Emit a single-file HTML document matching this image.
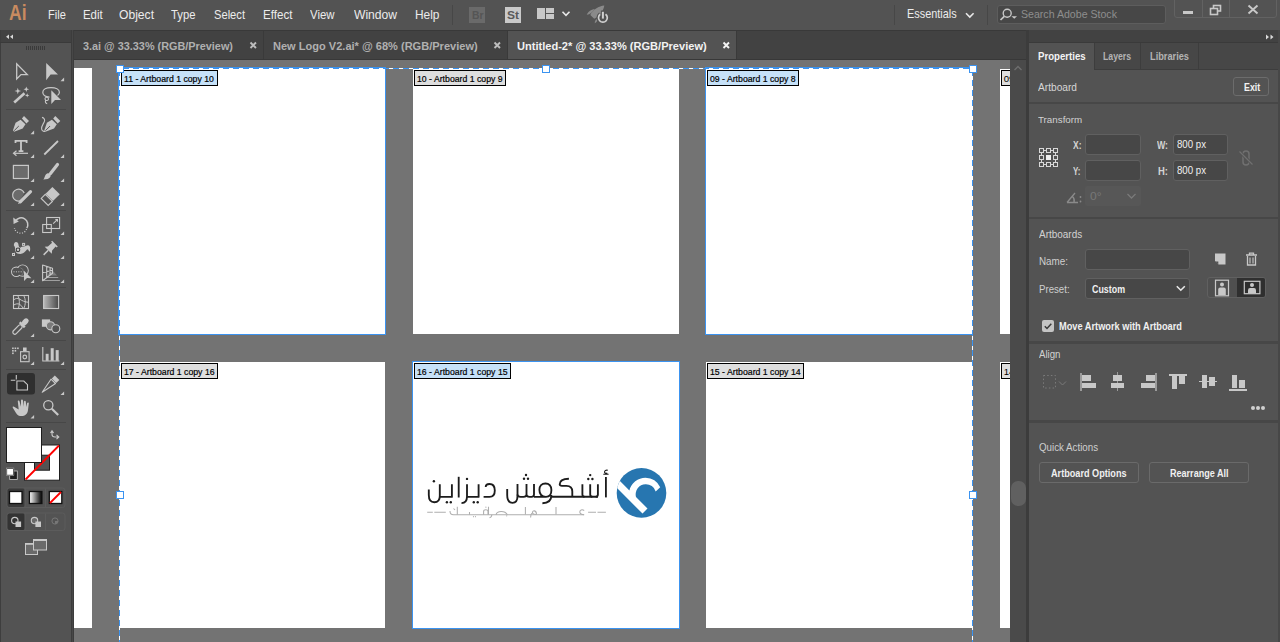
<!DOCTYPE html>
<html><head><meta charset="utf-8"><style>
*{margin:0;padding:0;box-sizing:border-box}
html,body{width:1280px;height:642px;overflow:hidden;background:#535353;font-family:"Liberation Sans",sans-serif}
.a{position:absolute}
.t{position:absolute;white-space:nowrap;line-height:1;transform-origin:0 0}
svg{position:absolute;overflow:visible}
</style></head><body>
<div class="a" style="left:0px;top:0px;width:1280px;height:30px;background:#535353;"></div>
<div class="t" style="left:8.70px;top:3.00px;font-size:21.5px;font-weight:bold;color:#c98b60;transform:scaleX(0.8140);">Ai</div>
<div class="t" style="left:47.50px;top:7.99px;font-size:13px;color:#ececec;transform:scaleX(0.8495);">File</div>
<div class="t" style="left:82.70px;top:7.99px;font-size:13px;color:#ececec;transform:scaleX(0.8792);">Edit</div>
<div class="t" style="left:119.00px;top:7.99px;font-size:13px;color:#ececec;transform:scaleX(0.9314);">Object</div>
<div class="t" style="left:171.00px;top:7.99px;font-size:13px;color:#ececec;transform:scaleX(0.8653);">Type</div>
<div class="t" style="left:214.00px;top:7.99px;font-size:13px;color:#ececec;transform:scaleX(0.8578);">Select</div>
<div class="t" style="left:263.40px;top:7.99px;font-size:13px;color:#ececec;transform:scaleX(0.8906);">Effect</div>
<div class="t" style="left:310.00px;top:7.99px;font-size:13px;color:#ececec;transform:scaleX(0.8753);">View</div>
<div class="t" style="left:353.50px;top:7.99px;font-size:13px;color:#ececec;transform:scaleX(0.9313);">Window</div>
<div class="t" style="left:414.50px;top:7.99px;font-size:13px;color:#ececec;transform:scaleX(0.9159);">Help</div>
<div class="a" style="left:452px;top:5px;width:1px;height:20px;background:#474747;"></div>
<div class="a" style="left:469px;top:7px;width:16px;height:16px;background:#6a6a6a;"></div>
<div class="t" style="left:471.50px;top:10.19px;font-size:11px;font-weight:bold;color:#555555;transform:scaleX(0.9412);">Br</div>
<div class="a" style="left:505px;top:7px;width:16px;height:16px;background:#c9c9c9;"></div>
<div class="t" style="left:507.00px;top:10.19px;font-size:11px;font-weight:bold;color:#5a5a5a;transform:scaleX(1.0909);">St</div>
<div class="a" style="left:537px;top:8px;width:8px;height:11px;background:#c8c8c8;"></div>
<div class="a" style="left:546px;top:8px;width:8px;height:5px;background:#c8c8c8;"></div>
<div class="a" style="left:546px;top:14px;width:8px;height:5px;background:#c8c8c8;"></div>
<svg style="left:560px;top:10px;" width="12" height="8" viewBox="0 0 12 8"><path d="M2.5 1.8 L6 5.3 L9.5 1.8" stroke="#e8e8e8" stroke-width="1.6" fill="none"/></svg>
<svg style="left:580px;top:0px;" width="35" height="30" viewBox="0 0 35 30"><g transform="translate(-580,0)"><path d="M604.3 5.6 C599 6 592.5 10 590.3 15 L594.2 18.8 C599.5 16.5 603.5 11 604.3 5.6 Z" fill="#8a8a8a"/><path d="M594.8 9 C591 9.5 587.8 12 586.8 14.8 C590 14.5 592.5 12.5 594.8 9 Z" fill="#8a8a8a"/><path d="M598 18 C595.5 19.5 594.5 21.5 594.8 23.2 C597 22 597.8 20 598 18 Z" fill="#8a8a8a"/><path d="M600.3 14.2 A4.4 4.4 0 1 0 605.5 14.2" fill="none" stroke="#535353" stroke-width="4"/><path d="M600.3 14.2 A4.4 4.4 0 1 0 605.5 14.2" fill="none" stroke="#d0d0d0" stroke-width="1.7"/><path d="M602.9 10.5 V19.5" stroke="#535353" stroke-width="4"/><path d="M602.9 11.8 V18.6" stroke="#d0d0d0" stroke-width="2"/></g></svg>
<div class="a" style="left:894px;top:5px;width:1px;height:20px;background:#474747;"></div>
<div class="t" style="left:906.60px;top:6.99px;font-size:13px;color:#ececec;transform:scaleX(0.8369);">Essentials</div>
<svg style="left:963px;top:11px;" width="12" height="8" viewBox="0 0 12 8"><path d="M3 2.2 L6.8 6 L10.6 2.2" stroke="#e8e8e8" stroke-width="1.6" fill="none"/></svg>
<div class="a" style="left:987px;top:5px;width:1px;height:20px;background:#474747;"></div>
<div class="a" style="left:997px;top:5px;width:169px;height:19px;background:#474747;border:1px solid #5d5d5d;border-radius:3px"></div>
<svg style="left:998px;top:7px;" width="22" height="15" viewBox="0 0 22 15"><circle cx="9.2" cy="6.3" r="4" stroke="#c8c8c8" stroke-width="1.4" fill="none"/><path d="M6.3 9.3 L2.5 13" stroke="#c8c8c8" stroke-width="1.7"/><path d="M13.5 9.3 L19 9.3 L16.25 11.8 Z" fill="#c8c8c8"/></svg>
<div class="t" style="left:1021.20px;top:8.81px;font-size:11.8px;color:#8e8e8e;transform:scaleX(0.8977);">Search Adobe Stock</div>
<div class="a" style="left:1174px;top:-3px;width:103px;height:21px;background:transparent;border:1px solid #626262;border-radius:3px"></div>
<div class="a" style="left:1202px;top:0px;width:1px;height:18px;background:#626262;"></div>
<div class="a" style="left:1229px;top:0px;width:1px;height:18px;background:#626262;"></div>
<div class="a" style="left:1183px;top:11px;width:10px;height:3px;background:#c8c8c8;"></div>
<svg style="left:1209px;top:4px;" width="15" height="12" viewBox="0 0 15 12"><rect x="4.5" y="1.5" width="7" height="5.5" stroke="#c8c8c8" stroke-width="1.6" fill="none"/><rect x="1.5" y="4.5" width="7" height="6" stroke="#c8c8c8" stroke-width="1.6" fill="#535353"/></svg>
<svg style="left:1246px;top:3px;" width="14" height="12" viewBox="0 0 14 12"><path d="M2.5 2.5 L11.5 10.5 M11.5 2.5 L2.5 10.5" stroke="#c8c8c8" stroke-width="1.9"/></svg>
<div class="a" style="left:74px;top:30px;width:955px;height:30px;background:#424242;"></div>
<div class="a" style="left:74px;top:30px;width:955px;height:1px;background:#393939;"></div>
<div class="a" style="left:74px;top:59px;width:955px;height:1px;background:#383838;"></div>
<div class="a" style="left:263px;top:31px;width:1px;height:28px;background:#3a3a3a;"></div>
<div class="a" style="left:507px;top:31px;width:1px;height:28px;background:#3a3a3a;"></div>
<div class="a" style="left:508px;top:31px;width:228px;height:28px;background:#535353;"></div>
<div class="a" style="left:736px;top:31px;width:1px;height:28px;background:#3a3a3a;"></div>
<div class="t" style="left:83.30px;top:40.18px;font-size:11.6px;font-weight:bold;color:#b0b0b0;transform:scaleX(0.9363);">3.ai @ 33.33% (RGB/Preview)</div>
<svg style="left:249.0px;top:41px;" width="9" height="9" viewBox="0 0 9 9"><path d="M1.5 1.5 L7 7 M7 1.5 L1.5 7" stroke="#bdbdbd" stroke-width="1.9"/></svg>
<div class="t" style="left:273.20px;top:40.18px;font-size:11.6px;font-weight:bold;color:#b0b0b0;transform:scaleX(0.9524);">New Logo V2.ai* @ 68% (RGB/Preview)</div>
<svg style="left:493.0px;top:41px;" width="9" height="9" viewBox="0 0 9 9"><path d="M1.5 1.5 L7 7 M7 1.5 L1.5 7" stroke="#bdbdbd" stroke-width="1.9"/></svg>
<div class="t" style="left:517.30px;top:40.18px;font-size:11.6px;font-weight:bold;color:#f2f2f2;transform:scaleX(0.9541);">Untitled-2* @ 33.33% (RGB/Preview)</div>
<svg style="left:722.3px;top:41px;" width="9" height="9" viewBox="0 0 9 9"><path d="M1.5 1.5 L7 7 M7 1.5 L1.5 7" stroke="#f4f4f4" stroke-width="1.9"/></svg>
<div class="a" style="left:74px;top:60px;width:936px;height:582px;background:#737373;"></div>
<div class="a" style="left:74px;top:68px;width:18px;height:266px;background:#ffffff;"></div>
<div class="a" style="left:74px;top:362px;width:18px;height:266px;background:#ffffff;"></div>
<div class="a" style="left:1000px;top:69px;width:10px;height:265px;background:#ffffff;"></div>
<div class="a" style="left:1000px;top:362px;width:10px;height:266px;background:#ffffff;"></div>
<div class="a" style="left:119px;top:68px;width:266px;height:266px;background:#fff;box-shadow:0 0 0 1px #3b93f0;"></div>
<div class="a" style="left:413px;top:68px;width:266px;height:266px;background:#fff;"></div>
<div class="a" style="left:706px;top:68px;width:266px;height:266px;background:#fff;box-shadow:0 0 0 1px #3b93f0;"></div>
<div class="a" style="left:119px;top:362px;width:266px;height:266px;background:#fff;"></div>
<div class="a" style="left:413px;top:362px;width:266px;height:266px;background:#fff;box-shadow:0 0 0 1px #3b93f0;"></div>
<div class="a" style="left:706px;top:362px;width:266px;height:266px;background:#fff;"></div>
<div class="a" style="left:121px;top:70px;width:97px;height:16px;background:#c6e1f8;border:1px solid #000"></div>
<div class="t" style="left:123.70px;top:73.67px;font-size:9.6px;color:#000000;transform:scaleX(0.9083);-webkit-text-stroke:0.2px #000;">11 - Artboard 1 copy 10</div>
<div class="a" style="left:414px;top:70px;width:92px;height:16px;background:#dedede;border:1px solid #000"></div>
<div class="t" style="left:416.70px;top:73.67px;font-size:9.6px;color:#000000;transform:scaleX(0.9066);-webkit-text-stroke:0.2px #000;">10 - Artboard 1 copy 9</div>
<div class="a" style="left:707px;top:70px;width:92px;height:16px;background:#c6e1f8;border:1px solid #000"></div>
<div class="t" style="left:709.70px;top:73.67px;font-size:9.6px;color:#000000;transform:scaleX(0.9066);-webkit-text-stroke:0.2px #000;">09 - Artboard 1 copy 8</div>
<div class="a" style="left:121px;top:363px;width:97px;height:16px;background:#dedede;border:1px solid #000"></div>
<div class="t" style="left:123.70px;top:366.67px;font-size:9.6px;color:#000000;transform:scaleX(0.9083);-webkit-text-stroke:0.2px #000;">17 - Artboard 1 copy 16</div>
<div class="a" style="left:414px;top:363px;width:97px;height:16px;background:#c6e1f8;border:1px solid #000"></div>
<div class="t" style="left:416.70px;top:366.67px;font-size:9.6px;color:#000000;transform:scaleX(0.9083);-webkit-text-stroke:0.2px #000;">16 - Artboard 1 copy 15</div>
<div class="a" style="left:707px;top:363px;width:97px;height:16px;background:#dedede;border:1px solid #000"></div>
<div class="t" style="left:709.70px;top:366.67px;font-size:9.6px;color:#000000;transform:scaleX(0.9083);-webkit-text-stroke:0.2px #000;">15 - Artboard 1 copy 14</div>
<div class="a" style="left:1001px;top:70px;width:20px;height:16px;background:#dedede;border:1px solid #000"></div>
<div class="t" style="left:1003.70px;top:73.67px;font-size:9.6px;color:#000;">09</div>
<div class="a" style="left:1001px;top:363px;width:20px;height:16px;background:#dedede;border:1px solid #000"></div>
<div class="t" style="left:1003.70px;top:366.67px;font-size:9.6px;color:#000;">14</div>
<div class="a" style="left:119px;top:68px;width:854px;height:1px;background:repeating-linear-gradient(to right,#fff 0 4px,#3b93f0 4px 10px)"></div>
<div class="a" style="left:119px;top:68px;width:1px;height:574px;background:repeating-linear-gradient(to bottom,#fff 0 2px,#3b93f0 2px 8px,#fff 8px 10px)"></div>
<div class="a" style="left:972px;top:68px;width:1px;height:574px;background:repeating-linear-gradient(to bottom,#fff 0 2px,#3b93f0 2px 8px,#fff 8px 10px)"></div>
<div class="a" style="left:116px;top:65px;width:8px;height:8px;background:#fff;border:1px solid #3b93f0"></div>
<div class="a" style="left:542px;top:65px;width:8px;height:8px;background:#fff;border:1px solid #3b93f0"></div>
<div class="a" style="left:969px;top:65px;width:8px;height:8px;background:#fff;border:1px solid #3b93f0"></div>
<div class="a" style="left:116px;top:491px;width:8px;height:8px;background:#fff;border:1px solid #3b93f0"></div>
<div class="a" style="left:969px;top:491px;width:8px;height:8px;background:#fff;border:1px solid #3b93f0"></div>
<svg style="left:413px;top:362px" width="266" height="266" viewBox="413 362 266 266"><defs><clipPath id="cc"><circle cx="641.5" cy="492.9" r="24.8"/></clipPath></defs><circle cx="641.5" cy="492.9" r="24.8" fill="#2776b0"/><g clip-path="url(#cc)"><path d="M605 476 L642.5 513.6 L647.5 508.6 L636 497 A10.2 10.2 0 0 1 645.5 484.2 A10.2 10.2 0 0 1 655.7 491.4 L660.2 487.3 A16.6 16.6 0 0 0 645.5 477.7 A16.6 16.6 0 0 0 629.4 490.4 L610 471 Z" fill="#fff"/></g><path d="M428.8 489.5 V495 C428.8 500 431 502.2 434.3 502.2 C437.8 502.2 439.8 500 439.8 496 V484.2" fill="none" stroke="#1c1c1c" stroke-width="1.85" stroke-linecap="butt" stroke-linejoin="round"/><path d="M439.8 496.9 H451.9 V484.2" fill="none" stroke="#1c1c1c" stroke-width="1.85" stroke-linecap="butt" stroke-linejoin="round"/><circle cx="433.9" cy="481.2" r="1.2" fill="#1c1c1c"/><circle cx="446.9" cy="502.2" r="1.2" fill="#1c1c1c"/><circle cx="450.8" cy="502.2" r="1.2" fill="#1c1c1c"/><path d="M458.7 476.8 V497.5" fill="none" stroke="#1c1c1c" stroke-width="1.85" stroke-linecap="butt" stroke-linejoin="round"/><path d="M467 484.2 V496.5 C467 501 465 503 461.5 503.2" fill="none" stroke="#1c1c1c" stroke-width="1.85" stroke-linecap="butt" stroke-linejoin="round"/><circle cx="467" cy="478.9" r="1.2" fill="#1c1c1c"/><path d="M467 496.9 H478.6 V484.2" fill="none" stroke="#1c1c1c" stroke-width="1.85" stroke-linecap="butt" stroke-linejoin="round"/><circle cx="473.8" cy="502.2" r="1.2" fill="#1c1c1c"/><circle cx="477.7" cy="502.2" r="1.2" fill="#1c1c1c"/><path d="M485.7 487 C485.7 485 487 484 489.5 484 C493 484 494.8 486.5 494.8 490.5 C494.8 494.8 493 496.9 489.5 496.9 H483.6" fill="none" stroke="#1c1c1c" stroke-width="1.85" stroke-linecap="butt" stroke-linejoin="round"/><path d="M507.2 489 V495 C507.2 500.5 509.5 502.8 512.5 502.8 C515.8 502.8 517.5 500.5 517.5 496 V483.9" fill="none" stroke="#1c1c1c" stroke-width="1.85" stroke-linecap="butt" stroke-linejoin="round"/><path d="M517.5 494.5 C517.5 496 518.5 496.8 520.5 496.8 H523.5 C525.5 496.8 526.5 496 526.5 494.5 V483.9 M526.5 494.5 C526.5 496 527.5 496.8 529.5 496.8 H531.5 C533.2 496.8 534 496 534 494.5 V483.9" fill="none" stroke="#1c1c1c" stroke-width="1.85" stroke-linecap="butt" stroke-linejoin="round"/><circle cx="524" cy="478.8" r="1.2" fill="#1c1c1c"/><circle cx="528" cy="478.8" r="1.2" fill="#1c1c1c"/><circle cx="526" cy="475" r="1.2" fill="#1c1c1c"/><path d="M534 496.8 H546 C549.5 496.8 551.4 495 551.4 490 C551.4 486 549 483.5 545.5 483.5 C541.8 483.5 539.4 486 539.4 489.8 C539.4 494 541.5 496.8 546 496.8 M551.4 495 C551.4 501 548.5 503.2 542.4 503.2" fill="none" stroke="#1c1c1c" stroke-width="1.85" stroke-linecap="butt" stroke-linejoin="round"/><path d="M551.4 496.7 H598" fill="none" stroke="#1c1c1c" stroke-width="1.85" stroke-linecap="butt" stroke-linejoin="round"/><path d="M568.9 478.7 C563 478.7 559.7 481 559.7 484.3 C559.7 485.3 560.5 485.8 562 485.8 H566.5 C570.5 485.8 572.3 488 572.3 491.5 V496.7" fill="none" stroke="#1c1c1c" stroke-width="1.85" stroke-linecap="butt" stroke-linejoin="round"/><path d="M582.4 484.3 V494.5 C582.4 496 583.2 496.7 584.5 496.7 M590.2 484.3 V494.5 C590.2 496 591 496.7 592.3 496.7 M597.9 484.3 V494.5 C597.9 496 597.2 496.7 595.8 496.7" fill="none" stroke="#1c1c1c" stroke-width="1.85" stroke-linecap="butt" stroke-linejoin="round"/><circle cx="588.3" cy="479" r="1.2" fill="#1c1c1c"/><circle cx="592.4" cy="479" r="1.2" fill="#1c1c1c"/><circle cx="590.2" cy="475.1" r="1.2" fill="#1c1c1c"/><path d="M605.9 477 V497.4" fill="none" stroke="#1c1c1c" stroke-width="1.85" stroke-linecap="butt" stroke-linejoin="round"/><path d="M607.8 470.2 C605.5 469.8 604.3 471 604.6 472.5 C605 473.5 606.5 473.6 607.3 473 M603.3 474.2 H608.6" fill="none" stroke="#1c1c1c" stroke-width="1.1"/><path d="M427.2 512.3 H432.8 M434.3 512.3 H445.8 M588.1 512.3 H596 M597.5 512.3 H605.9" fill="none" stroke="#aeaeae" stroke-width="1.05"/><path d="M450 511 C450 514 451 514.8 453.5 514.8 H584" fill="none" stroke="#aeaeae" stroke-width="1.05"/><path d="M457.3 506.7 V514.8 M469.5 512 V514.8 M488.5 506.7 V514.8 M525.4 507 V514.5 M556 507 V514.5" fill="none" stroke="#aeaeae" stroke-width="1.05"/><path d="M453.5 508.5 L455 510" fill="none" stroke="#aeaeae" stroke-width="1.05"/><path d="M483.6 514.8 V511.5 C483.6 509.3 488 509.3 488 511.5 V514.8" fill="none" stroke="#aeaeae" stroke-width="1.05"/><circle cx="485.9" cy="507.2" r="0.6" fill="#aeaeae"/><circle cx="473.5" cy="516.7" r="0.6" fill="#aeaeae"/><circle cx="475.5" cy="516.7" r="0.6" fill="#aeaeae"/><circle cx="506.7" cy="515.8" r="0.6" fill="#aeaeae"/><path d="M491.8 514.8 C491.8 516.5 491 517.5 489.5 517.8" fill="none" stroke="#aeaeae" stroke-width="1.05"/><path d="M496 514.8 C497 510.5 505 510.5 507.4 514.8" fill="none" stroke="#aeaeae" stroke-width="1.05"/><path d="M536.5 514.5 C536.5 510 532.5 510 532.5 512.5 C532.5 514 534 514.5 536.5 514.5 M532 513 C531 514 530.6 515.5 530.6 517.5" fill="none" stroke="#aeaeae" stroke-width="1.05"/><path d="M584.2 510.5 C582 509 579.8 510 579.8 512 C579.8 513.5 581.5 514.5 584.2 514.8" fill="none" stroke="#aeaeae" stroke-width="1.05"/></svg>
<div class="a" style="left:1010px;top:60px;width:16px;height:582px;background:#4a4a4a;"></div>
<svg style="left:1012px;top:64px;" width="12" height="8" viewBox="0 0 12 8"><path d="M2.5 6 L6 2.5 L9.5 6" stroke="#6e6e6e" stroke-width="1.3" fill="none"/></svg>
<div class="a" style="left:1011px;top:481px;width:15px;height:25px;background:#606060;border-radius:7px"></div>
<div class="a" style="left:1026px;top:30px;width:3px;height:612px;background:#3c3c3c;"></div>
<div class="a" style="left:1029px;top:30px;width:251px;height:612px;background:#535353;"></div>
<div class="a" style="left:1029px;top:30px;width:251px;height:13px;background:#424242;"></div>
<div class="a" style="left:1029px;top:42px;width:251px;height:1px;background:#3a3a3a;"></div>
<svg style="left:1264px;top:33px;" width="12" height="8" viewBox="0 0 12 8"><path d="M2 1.5 L5 4 L2 6.5 Z M6.5 1.5 L9.5 4 L6.5 6.5 Z" fill="#d8d8d8"/></svg>
<div class="a" style="left:1029px;top:43px;width:251px;height:27px;background:#474747;"></div>
<div class="a" style="left:1029px;top:43px;width:65px;height:27px;background:#535353;"></div>
<div class="a" style="left:1094px;top:43px;width:1px;height:27px;background:#3d3d3d;"></div>
<div class="a" style="left:1140px;top:43px;width:1px;height:27px;background:#3d3d3d;"></div>
<div class="a" style="left:1198px;top:43px;width:1px;height:27px;background:#3d3d3d;"></div>
<div class="a" style="left:1094px;top:69px;width:186px;height:1px;background:#3d3d3d;"></div>
<div class="t" style="left:1038.10px;top:51.11px;font-size:10.5px;font-weight:bold;color:#f4f4f4;transform:scaleX(0.9181);">Properties</div>
<div class="t" style="left:1103.40px;top:51.11px;font-size:10.5px;font-weight:bold;color:#b4b4b4;transform:scaleX(0.8295);">Layers</div>
<div class="t" style="left:1150.00px;top:51.11px;font-size:10.5px;font-weight:bold;color:#b4b4b4;transform:scaleX(0.8789);">Libraries</div>
<div class="t" style="left:1038.00px;top:82.09px;font-size:11px;color:#d6d6d6;transform:scaleX(0.9238);">Artboard</div>
<div class="a" style="left:1233px;top:77px;width:36px;height:19px;background:transparent;border:1px solid #6c6c6c;border-radius:3px"></div>
<div class="t" style="left:1243.60px;top:82.09px;font-size:11px;font-weight:bold;color:#f2f2f2;transform:scaleX(0.8025);">Exit</div>
<div class="a" style="left:1029px;top:102px;width:251px;height:2px;background:#474747;"></div>
<div class="t" style="left:1038.30px;top:115.42px;font-size:9.9px;color:#d2d2d2;transform:scaleX(0.9902);">Transform</div>
<svg style="left:0;top:0" width="1280" height="642" viewBox="0 0 1280 642"><rect x="1039.5" y="148.5" width="4" height="4" fill="none" stroke="#d8d8d8" stroke-width="1"/><rect x="1039.5" y="155.5" width="4" height="4" fill="none" stroke="#d8d8d8" stroke-width="1"/><rect x="1039.5" y="162.5" width="4" height="4" fill="none" stroke="#d8d8d8" stroke-width="1"/><rect x="1046.5" y="148.5" width="4" height="4" fill="none" stroke="#d8d8d8" stroke-width="1"/><rect x="1046.0" y="155.0" width="5" height="5" fill="#f0f0f0"/><rect x="1046.5" y="162.5" width="4" height="4" fill="none" stroke="#d8d8d8" stroke-width="1"/><rect x="1053.5" y="148.5" width="4" height="4" fill="none" stroke="#d8d8d8" stroke-width="1"/><rect x="1053.5" y="155.5" width="4" height="4" fill="none" stroke="#d8d8d8" stroke-width="1"/><rect x="1053.5" y="162.5" width="4" height="4" fill="none" stroke="#d8d8d8" stroke-width="1"/><path d="M1044 150.5 H1046 M1051 150.5 H1053 M1044 164.5 H1046 M1051 164.5 H1053 M1041.5 153 V155 M1041.5 160 V162 M1055.5 153 V155 M1055.5 160 V162" stroke="#d8d8d8" stroke-width="1"/></svg>
<div class="t" style="left:1072.50px;top:140.11px;font-size:10.5px;font-weight:bold;color:#d4d4d4;transform:scaleX(0.8095);">X:</div>
<div class="t" style="left:1073.00px;top:166.11px;font-size:10.5px;font-weight:bold;color:#d4d4d4;transform:scaleX(0.7630);">Y:</div>
<div class="t" style="left:1156.80px;top:140.11px;font-size:10.5px;font-weight:bold;color:#d4d4d4;transform:scaleX(0.8354);">W:</div>
<div class="t" style="left:1158.00px;top:166.11px;font-size:10.5px;font-weight:bold;color:#d4d4d4;transform:scaleX(0.9027);">H:</div>
<div class="a" style="left:1085px;top:134px;width:56px;height:21px;background:#474747;border:1px solid #606060;border-radius:3px"></div>
<div class="a" style="left:1085px;top:160px;width:56px;height:21px;background:#474747;border:1px solid #606060;border-radius:3px"></div>
<div class="a" style="left:1173px;top:134px;width:55px;height:21px;background:#474747;border:1px solid #606060;border-radius:3px"></div>
<div class="a" style="left:1173px;top:160px;width:55px;height:21px;background:#474747;border:1px solid #606060;border-radius:3px"></div>
<div class="t" style="left:1176.80px;top:139.42px;font-size:10.6px;color:#f0f0f0;transform:scaleX(0.9120);">800 px</div>
<div class="t" style="left:1176.80px;top:165.42px;font-size:10.6px;color:#f0f0f0;transform:scaleX(0.9120);">800 px</div>
<svg style="left:1237px;top:149px;" width="18" height="18" viewBox="0 0 18 18"><rect x="6" y="2" width="6" height="14" rx="3" stroke="#707070" stroke-width="1.5" fill="none"/><path d="M2.5 2.5 L15.5 15.5" stroke="#535353" stroke-width="3"/><path d="M2.5 2.5 L15.5 15.5" stroke="#707070" stroke-width="1.3"/></svg>
<div class="a" style="left:1085px;top:186px;width:56px;height:20px;background:#575757;border-radius:2px"></div>
<svg style="left:1065px;top:190px;" width="20" height="14" viewBox="0 0 20 14"><path d="M2 12.5 H13 M2 12.5 L10 3 M7.5 6.5 A6 6 0 0 1 9 12.5" stroke="#8a8a8a" stroke-width="1.3" fill="none"/><circle cx="15.5" cy="7" r="0.9" fill="#8a8a8a"/><circle cx="15.5" cy="11.5" r="0.9" fill="#8a8a8a"/></svg>
<div class="t" style="left:1089.50px;top:191.02px;font-size:10.6px;color:#777777;transform:scaleX(1.1358);">0°</div>
<svg style="left:1126px;top:192px;" width="11" height="8" viewBox="0 0 11 8"><path d="M1.5 2 L5.5 6 L9.5 2" stroke="#7a7a7a" stroke-width="1.3" fill="none"/></svg>
<div class="a" style="left:1029px;top:217px;width:251px;height:2px;background:#474747;"></div>
<div class="t" style="left:1038.80px;top:229.66px;font-size:10.2px;color:#d2d2d2;transform:scaleX(0.9770);">Artboards</div>
<div class="t" style="left:1039.00px;top:255.51px;font-size:10.5px;color:#cfcfcf;transform:scaleX(0.9374);">Name:</div>
<div class="t" style="left:1039.00px;top:284.11px;font-size:10.5px;color:#cfcfcf;transform:scaleX(0.9194);">Preset:</div>
<div class="a" style="left:1085px;top:249px;width:105px;height:21px;background:#474747;border:1px solid #606060;border-radius:3px"></div>
<div class="a" style="left:1085px;top:278px;width:105px;height:21px;background:#474747;border:1px solid #606060;border-radius:3px"></div>
<div class="t" style="left:1092.00px;top:283.86px;font-size:10.8px;font-weight:bold;color:#f0f0f0;transform:scaleX(0.8215);">Custom</div>
<svg style="left:1175px;top:284px;" width="12" height="9" viewBox="0 0 12 9"><path d="M1.8 2.2 L5.8 6.2 L9.8 2.2" stroke="#e8e8e8" stroke-width="1.6" fill="none"/></svg>
<svg style="left:1213px;top:252px;" width="14" height="14" viewBox="0 0 14 14"><path d="M2 1.5 H12.5 V12.5 H5.5 L2 9 Z" fill="#c8c8c8"/><path d="M2 9.5 H5.3 V12.5 Z" fill="#535353"/></svg>
<svg style="left:1244px;top:251px;" width="15" height="16" viewBox="0 0 15 16"><path d="M2 4 H13 M5.5 4 V2.2 H9.5 V4" stroke="#c8c8c8" stroke-width="1.3" fill="none"/><path d="M3.5 5 V14 H11.5 V5" stroke="#c8c8c8" stroke-width="1.3" fill="none"/><path d="M6 6.5 V12.5 M9 6.5 V12.5" stroke="#c8c8c8" stroke-width="1.1"/></svg>
<div class="a" style="left:1207px;top:277px;width:59px;height:21px;background:#4f4f4f;border:1px solid #606060;border-radius:3px"></div>
<div class="a" style="left:1237px;top:278px;width:28px;height:19px;background:#2f2f2f;border-radius:0 2px 2px 0"></div>
<svg style="left:1214px;top:279px;" width="16" height="18" viewBox="0 0 16 18"><rect x="1.5" y="1.2" width="13" height="15.6" stroke="#c8c8c8" stroke-width="1.2" fill="none"/><circle cx="8" cy="5.5" r="2" fill="#c8c8c8"/><path d="M4.2 16 V10.5 Q4.2 8.5 6.2 8.5 H9.8 Q11.8 8.5 11.8 10.5 V16 Z" fill="#c8c8c8"/></svg>
<svg style="left:1243px;top:280px;" width="18" height="15" viewBox="0 0 18 15"><rect x="1.3" y="1.3" width="15.6" height="12.4" stroke="#c8c8c8" stroke-width="1.2" fill="none"/><circle cx="9" cy="5" r="2" fill="#c8c8c8"/><path d="M5 13.5 V10.2 Q5 8 7 8 H11 Q13 8 13 10.2 V13.5 Z" fill="#c8c8c8"/></svg>
<div class="a" style="left:1042px;top:320px;width:12px;height:12px;background:#c4c4c4;border-radius:2px"></div>
<svg style="left:1042px;top:320px;" width="12" height="12" viewBox="0 0 12 12"><path d="M2.8 6.2 L5 8.5 L9.3 3.8" stroke="#3a3a3a" stroke-width="1.5" fill="none"/></svg>
<div class="t" style="left:1059.00px;top:321.16px;font-size:10.8px;font-weight:bold;color:#f0f0f0;transform:scaleX(0.8553);">Move Artwork with Artboard</div>
<div class="a" style="left:1029px;top:341px;width:251px;height:3px;background:#474747;"></div>
<div class="t" style="left:1039.00px;top:349.56px;font-size:10.2px;color:#d2d2d2;transform:scaleX(0.9477);">Align</div>
<svg style="left:1042px;top:374px;" width="26" height="16" viewBox="0 0 26 16"><rect x="1.5" y="1.5" width="12" height="12.5" stroke="#7a7a7a" stroke-width="1" stroke-dasharray="1.5 2.2" fill="none"/><path d="M17 7.5 L20.5 11 L24 7.5" stroke="#7a7a7a" stroke-width="1" fill="none"/></svg>
<div class="a" style="left:1080px;top:373px;width:2px;height:18px;background:#9a9a9a;"></div>
<div class="a" style="left:1082px;top:375px;width:9px;height:6px;background:#c8c8c8;"></div>
<div class="a" style="left:1082px;top:383px;width:14px;height:5px;background:#c8c8c8;"></div>
<div class="a" style="left:1117px;top:372px;width:1px;height:19px;background:#9a9a9a;"></div>
<div class="a" style="left:1113px;top:375px;width:9px;height:6px;background:#c8c8c8;"></div>
<div class="a" style="left:1111px;top:383px;width:13px;height:5px;background:#c8c8c8;"></div>
<div class="a" style="left:1155px;top:373px;width:2px;height:18px;background:#9a9a9a;"></div>
<div class="a" style="left:1146px;top:375px;width:9px;height:6px;background:#c8c8c8;"></div>
<div class="a" style="left:1141px;top:383px;width:14px;height:5px;background:#c8c8c8;"></div>
<div class="a" style="left:1169px;top:374px;width:18px;height:1.5px;background:#c8c8c8;"></div>
<div class="a" style="left:1172px;top:376px;width:5px;height:13px;background:#c8c8c8;"></div>
<div class="a" style="left:1179px;top:376px;width:6px;height:8px;background:#c8c8c8;"></div>
<div class="a" style="left:1199px;top:381px;width:18px;height:1px;background:#c8c8c8;"></div>
<div class="a" style="left:1202px;top:375px;width:5px;height:13px;background:#c8c8c8;"></div>
<div class="a" style="left:1209px;top:377px;width:6px;height:9px;background:#c8c8c8;"></div>
<div class="a" style="left:1229px;top:389px;width:18px;height:1.5px;background:#c8c8c8;"></div>
<div class="a" style="left:1232px;top:375px;width:5px;height:13px;background:#c8c8c8;"></div>
<div class="a" style="left:1239px;top:380px;width:6px;height:8px;background:#c8c8c8;"></div>
<div class="a" style="left:1250.8px;top:405.8px;width:4.5px;height:4.5px;border-radius:50%;background:#d0d0d0"></div>
<div class="a" style="left:1255.8px;top:405.8px;width:4.5px;height:4.5px;border-radius:50%;background:#d0d0d0"></div>
<div class="a" style="left:1260.8px;top:405.8px;width:4.5px;height:4.5px;border-radius:50%;background:#d0d0d0"></div>
<div class="a" style="left:1029px;top:420px;width:251px;height:3px;background:#474747;"></div>
<div class="t" style="left:1039.00px;top:442.41px;font-size:10.5px;color:#cfcfcf;transform:scaleX(0.9285);">Quick Actions</div>
<div class="a" style="left:1039px;top:462px;width:100px;height:21px;background:transparent;border:1px solid #6a6a6a;border-radius:3px"></div>
<div class="a" style="left:1149px;top:462px;width:100px;height:21px;background:transparent;border:1px solid #6a6a6a;border-radius:3px"></div>
<div class="t" style="left:1051.20px;top:467.66px;font-size:10.8px;font-weight:bold;color:#f0f0f0;transform:scaleX(0.8451);">Artboard Options</div>
<div class="t" style="left:1169.80px;top:467.66px;font-size:10.8px;font-weight:bold;color:#f0f0f0;transform:scaleX(0.8378);">Rearrange All</div>
<div class="a" style="left:0px;top:30px;width:71px;height:612px;background:#535353;"></div>
<div class="a" style="left:0px;top:30px;width:1px;height:612px;background:#3e3e3e;"></div>
<div class="a" style="left:71px;top:30px;width:3px;height:612px;background:#3c3c3c;"></div>
<div class="a" style="left:72px;top:30px;width:1px;height:612px;background:#474747;"></div>
<div class="a" style="left:1px;top:30px;width:70px;height:13px;background:#424242;"></div>
<div class="a" style="left:0px;top:42px;width:71px;height:1px;background:#3a3a3a;"></div>
<div class="a" style="left:1278px;top:30px;width:2px;height:612px;background:#474747;"></div>
<svg style="left:0;top:0" width="74" height="642" viewBox="0 0 74 642"><path d="M9 34.5 L6 36.7 L9 38.9 Z M13 34.5 L10 36.7 L13 38.9 Z" fill="#d8d8d8"/><rect x="26" y="46" width="1" height="4" fill="#3a3a3a"/><rect x="28" y="46" width="1" height="4" fill="#3a3a3a"/><rect x="30" y="46" width="1" height="4" fill="#3a3a3a"/><rect x="32" y="46" width="1" height="4" fill="#3a3a3a"/><rect x="34" y="46" width="1" height="4" fill="#3a3a3a"/><rect x="36" y="46" width="1" height="4" fill="#3a3a3a"/><rect x="38" y="46" width="1" height="4" fill="#3a3a3a"/><rect x="40" y="46" width="1" height="4" fill="#3a3a3a"/><rect x="42" y="46" width="1" height="4" fill="#3a3a3a"/><rect x="44" y="46" width="1" height="4" fill="#3a3a3a"/><rect x="6" y="109" width="60" height="1" fill="#474747"/><rect x="6" y="210" width="60" height="1" fill="#474747"/><rect x="6" y="287" width="60" height="1" fill="#474747"/><rect x="6" y="340" width="60" height="1" fill="#474747"/><rect x="6" y="369" width="60" height="1" fill="#474747"/><rect x="6" y="422" width="60" height="1" fill="#474747"/><path d="M16.7 63.8 L16.7 79 L21 74.6 L27.3 74.6 Z" fill="none" stroke="#c8c8c8" stroke-width="1.3" stroke-linejoin="miter"/><path d="M46.2 63.1 L46.2 80.2 L50.6 74.6 L58 74.6 Z" fill="#c8c8c8"/><path d="M64.1 77.60000000000001 L64.1 81.2 L60.49999999999999 81.2 Z" fill="#c8c8c8"/><path d="M14.2 102.5 L24.5 93.2" stroke="#c8c8c8" stroke-width="2.6"/><path d="M17.80 87.70 L18.58 90.22 L21.10 91.00 L18.58 91.78 L17.80 94.30 L17.02 91.78 L14.50 91.00 L17.02 90.22 Z" fill="#c8c8c8"/><path d="M26.30 86.40 L27.01 88.49 L29.10 89.20 L27.01 89.91 L26.30 92.00 L25.59 89.91 L23.50 89.20 L25.59 88.49 Z" fill="#c8c8c8"/><path d="M27.20 93.20 L27.77 94.83 L29.40 95.40 L27.77 95.97 L27.20 97.60 L26.63 95.97 L25.00 95.40 L26.63 94.83 Z" fill="#c8c8c8"/><path d="M49.5 97.2 C45 96.8 42.8 94.8 42.8 92.3 C42.8 89.3 46.5 87.6 51 87.6 C55.5 87.6 59.4 89.3 59.4 92.3 C59.4 93.8 58.6 94.8 57.5 95.5" fill="none" stroke="#c8c8c8" stroke-width="1.2"/><path d="M48.5 99.5 C48.5 97.8 47.3 97 46.2 97.3 C44.8 97.7 44.6 99.6 45.8 100.2 C46.8 100.7 48 100.2 48.5 99.5 M45.6 100.5 C45 102 45.6 103.5 47.2 103.6" fill="none" stroke="#c8c8c8" stroke-width="1.1"/><path d="M51.3 90.3 L51.3 104 L55 100 L61 100 Z" fill="#c8c8c8"/><g transform="translate(0,0)"><path d="M20.6 119.8 L15.6 122.8 L13 130.3 L14.1 131.8 L22.7 128.4 L25.5 124.3 Z" fill="#c8c8c8"/><path d="M21.9 118.6 L24 116 L29 121 L26.4 123.4 Z" fill="#c8c8c8"/><path d="M14.2 130.6 L18.8 126" stroke="#535353" stroke-width="1"/></g><path d="M34.1 130.6 L34.1 134.2 L30.5 134.2 Z" fill="#c8c8c8"/><g transform="translate(31.3,0)"><path d="M20.6 119.8 L15.6 122.8 L13 130.3 L14.1 131.8 L22.7 128.4 L25.5 124.3 Z" fill="#c8c8c8"/><path d="M21.9 118.6 L24 116 L29 121 L26.4 123.4 Z" fill="#c8c8c8"/><path d="M14.2 130.6 L18.8 126" stroke="#535353" stroke-width="1"/></g><path d="M42 117.4 C44.5 118 45.2 120 44.2 122 C43 124.5 41.2 126.5 41.6 129 C42 130.8 43.5 131.6 45.2 131.3" fill="none" stroke="#c8c8c8" stroke-width="1.1"/><path d="M15.5 143 V140.8 H26.6 V143 M21 140.8 V151.2 M18.6 151.2 H23.4" fill="none" stroke="#c8c8c8" stroke-width="1.8"/><path d="M14 153.3 H28" stroke="#c8c8c8" stroke-width="1.2"/><path d="M16.5 150.8 L13.5 153.3 L16.5 155.8" fill="none" stroke="#c8c8c8" stroke-width="1.2"/><path d="M34.1 154.3 L34.1 157.9 L30.5 157.9 Z" fill="#c8c8c8"/><path d="M44.3 154.5 L58 141" stroke="#c8c8c8" stroke-width="1.8"/><path d="M64.1 154.3 L64.1 157.9 L60.49999999999999 157.9 Z" fill="#c8c8c8"/><rect x="13.4" y="165.4" width="15" height="13.1" fill="#6b6b6b" stroke="#c8c8c8" stroke-width="1.2"/><path d="M34.1 178.4 L34.1 182 L30.5 182 Z" fill="#c8c8c8"/><path d="M50.5 173.5 L57.5 164.5" stroke="#c8c8c8" stroke-width="3.2" stroke-linecap="round"/><path d="M43.2 179.6 C45 178 44.5 174.5 47.2 173.4 C49.5 172.5 51.3 174.5 50.5 176.6 C49.5 179 46.5 179.6 43.2 179.6 Z" fill="#c8c8c8"/><path d="M64.1 178.4 L64.1 182 L60.49999999999999 182 Z" fill="#c8c8c8"/><path d="M20 201 A6 6 0 1 1 24.2 193" fill="#6b6b6b" stroke="#c8c8c8" stroke-width="1.2"/><path d="M30.5 191.7 L20.5 201.7" stroke="#c8c8c8" stroke-width="3.2" stroke-linecap="round"/><path d="M19.4 200.6 L18 204 L21.6 202.8 Z" fill="#c8c8c8"/><path d="M34.1 202.4 L34.1 206 L30.5 206 Z" fill="#c8c8c8"/><path d="M52.4 187 L59.8 194.3 L53 201 L45.6 193.7 Z" fill="#c8c8c8"/><path d="M45.3 194.3 L52.4 201.4 L48.2 205.4 L41.2 198.4 Z" fill="none" stroke="#c8c8c8" stroke-width="1.1"/><path d="M64.1 202.4 L64.1 206 L60.49999999999999 206 Z" fill="#c8c8c8"/><path d="M15.5 221 A6.2 6.2 0 1 1 26.8 228" fill="none" stroke="#c8c8c8" stroke-width="1.5"/><path d="M13.2 217.5 L13.6 224 L18.8 221.6 Z" fill="#c8c8c8"/><path d="M26.5 229 A6.2 6.2 0 0 1 14.5 228" fill="none" stroke="#c8c8c8" stroke-width="1.3" stroke-dasharray="1 1.6"/><path d="M34.1 231.4 L34.1 235 L30.5 235 Z" fill="#c8c8c8"/><rect x="46.6" y="217.5" width="13" height="11" fill="none" stroke="#c8c8c8" stroke-width="1.1"/><rect x="42.7" y="224.5" width="8.6" height="8" fill="none" stroke="#c8c8c8" stroke-width="1.1"/><path d="M53.2 223.7 L57.5 219.4" stroke="#c8c8c8" stroke-width="1.1"/><path d="M54.8 219 L58 219 L58 222.2 Z" fill="#c8c8c8"/><path d="M64.1 231.4 L64.1 235 L60.49999999999999 235 Z" fill="#c8c8c8"/><path d="M13.8 245.2 C14 243 15 242.1 16 242.1 C17.5 242.1 18.4 243 18.6 245.5 L19.2 246.9 C20.5 247 22 246.8 23.7 246.6 C25.5 246.3 26.5 245.3 27.8 245.3 C29.5 245.3 30.3 247 30.2 249 L29.9 251.7 C29 251.5 28.6 250.5 28.3 249.8 L27.1 249.2 C26.5 250 25.5 251.5 24.4 252.2 C23 253.3 21.5 253.9 20.3 253.9 C18 253.9 16.3 253.3 15.6 252 C15 250.8 15 249.5 15.1 248.3 C15 247.2 14.5 246.3 13.8 245.2 Z" fill="#c8c8c8"/><path d="M14.5 253 L22.5 245.2" stroke="#535353" stroke-width="0.9"/><path d="M13 254 L14.5 253 M22.5 245.2 L23.5 244.3" stroke="#c8c8c8" stroke-width="0.9"/><rect x="12" y="253" width="3" height="3" fill="#c8c8c8"/><rect x="13.05" y="254.05" width="0.9" height="0.9" fill="#535353"/><rect x="22.1" y="242.9" width="3" height="3" fill="#c8c8c8"/><rect x="23.15" y="243.95" width="0.9" height="0.9" fill="#535353"/><circle cx="18" cy="249.8" r="1.8" fill="#c8c8c8" stroke="#3e3e3e" stroke-width="1.1"/><path d="M34.1 255.4 L34.1 259 L30.5 259 Z" fill="#c8c8c8"/><g transform="translate(50,248.5) rotate(45)"><path d="M-4 -7 H4 V-5.5 H2.5 L3 0 L5 2.5 H-5 L-3 0 L-2.5 -5.5 H-4 Z" fill="#c8c8c8"/><path d="M0 2.5 V9" stroke="#c8c8c8" stroke-width="1.5"/></g><path d="M64.1 255.4 L64.1 259 L60.49999999999999 259 Z" fill="#c8c8c8"/><circle cx="16.3" cy="271.8" r="4.7" fill="none" stroke="#c8c8c8" stroke-width="1.2"/><circle cx="22.6" cy="270.6" r="5.6" fill="none" stroke="#c8c8c8" stroke-width="1.2"/><circle cx="16.3" cy="271.8" r="4.1" fill="#535353"/><circle cx="22.6" cy="270.6" r="5" fill="#535353"/><path d="M20.3 267.8 A4.1 4.1 0 0 1 20.3 275.8" fill="none" stroke="#7a7a7a" stroke-width="0.9"/><path d="M13.5 271.8 H23.5" stroke="#c8c8c8" stroke-width="1" stroke-dasharray="1 1.4"/><path d="M24 270.8 L24 281 L27 278 L31.4 278.2 Z" fill="#c8c8c8"/><path d="M34.1 279.4 L34.1 283 L30.5 283 Z" fill="#c8c8c8"/><path d="M50 271.5 L53.5 271.5 L57 275.6 L47.5 275.6 Z" fill="#7c7c7c"/><path d="M46 277.5 H58.2 M43 280.5 H59.9" stroke="#a0a0a0" stroke-width="1"/><path d="M42.6 265.1 V280.7 L52.5 273.3 V268.2 Z M46.7 266.4 V277.6 M50.1 267.5 V275 M42.6 272.6 L52.5 270.3" fill="none" stroke="#c8c8c8" stroke-width="1.1" stroke-linejoin="round"/><path d="M64.1 279.4 L64.1 283 L60.49999999999999 283 Z" fill="#c8c8c8"/><rect x="13.5" y="295.5" width="15" height="13" fill="none" stroke="#c8c8c8" stroke-width="1.1"/><path d="M17.8 295.5 C19.8 299 19.8 304 18.4 308.5 M13.5 300 C15.5 298.2 18 297.8 20 299.3 C22 300.8 25 302 28.5 302.3 M13.5 305.2 C15.5 303.8 18 303.4 19.6 304.3 C21.2 305.3 22.5 306.8 23.3 308.5 M23.7 295.5 C25.8 299 25.8 305 23.7 308.5" fill="none" stroke="#c8c8c8" stroke-width="0.95"/><defs><linearGradient id="gr" x1="0" x2="1"><stop offset="0" stop-color="#b8b8b8"/><stop offset="1" stop-color="#4a4a4a"/></linearGradient><linearGradient id="gr2" x1="0" x2="1"><stop offset="0" stop-color="#fff"/><stop offset="1" stop-color="#000"/></linearGradient></defs><rect x="43.6" y="295.5" width="15" height="13" fill="url(#gr)" stroke="#c8c8c8" stroke-width="1.1"/><g transform="translate(20.5,326.5) rotate(45)"><rect x="-2" y="-1.5" width="4" height="11.5" rx="2" fill="none" stroke="#c8c8c8" stroke-width="1.2"/><rect x="-3.6" y="-3.8" width="7.2" height="2.6" rx="0.6" fill="#c8c8c8"/><rect x="-2.6" y="-10.5" width="5.2" height="7.5" rx="2.6" fill="#c8c8c8"/></g><path d="M34.1 333.4 L34.1 337 L30.5 337 Z" fill="#c8c8c8"/><rect x="41.9" y="319.4" width="8.2" height="7.4" fill="#c8c8c8"/><circle cx="50.5" cy="325.8" r="4.1" fill="#7a7a7a" stroke="#c8c8c8" stroke-width="1.1"/><circle cx="55.8" cy="328.8" r="4" fill="#535353" stroke="#c8c8c8" stroke-width="1.1"/><rect x="12.1" y="347.5" width="1.6" height="1.6" fill="#c8c8c8"/><rect x="14.6" y="347.5" width="1.6" height="1.6" fill="#c8c8c8"/><rect x="17.1" y="347.5" width="1.6" height="1.6" fill="#c8c8c8"/><rect x="12.1" y="350" width="1.6" height="1.6" fill="#c8c8c8"/><rect x="14.6" y="350" width="1.6" height="1.6" fill="#c8c8c8"/><rect x="12.1" y="352.5" width="1.6" height="1.6" fill="#c8c8c8"/><rect x="20.6" y="351.7" width="8.5" height="10" fill="none" stroke="#c8c8c8" stroke-width="1.1"/><rect x="23" y="347.5" width="3.6" height="3.6" fill="#c8c8c8"/><circle cx="24.8" cy="357" r="1.8" fill="none" stroke="#c8c8c8" stroke-width="1.2"/><path d="M34.1 361.4 L34.1 365 L30.5 365 Z" fill="#c8c8c8"/><path d="M42.8 347 V361 H59.4" fill="none" stroke="#c8c8c8" stroke-width="1.1"/><rect x="45.7" y="353.8" width="2.9" height="7" fill="#c8c8c8"/><rect x="50.7" y="348.2" width="3" height="12.6" fill="#c8c8c8"/><rect x="55.7" y="350.1" width="3" height="10.7" fill="#c8c8c8"/><path d="M64.1 361.4 L64.1 365 L60.49999999999999 365 Z" fill="#c8c8c8"/><rect x="7" y="373" width="28" height="21.6" rx="3" fill="#2f2f2f"/><path d="M10.8 380.3 H15.3 M16.3 375 V379.5" stroke="#c8c8c8" stroke-width="1.1"/><path d="M16.9 381 H23.8 L27.5 384.7 V390 H16.9 Z" fill="none" stroke="#c8c8c8" stroke-width="1.1"/><path d="M42.2 392.2 L51 379.2 L55.5 383.5 Z" fill="none" stroke="#c8c8c8" stroke-width="1.1" stroke-linejoin="round"/><path d="M51.8 378.5 L54.8 375.6 L59.3 380 L56.2 383 Z" fill="#c8c8c8"/><path d="M64.1 391.4 L64.1 395 L60.49999999999999 395 Z" fill="#c8c8c8"/><path d="M14.5 407 C13.5 406 12.3 406.5 12.8 407.8 L16 413 C17.5 415.5 19 416 21.5 416 C25 416 27.5 414 28 410 L28.8 403.5 C29 402 27.2 402 27 403.5 L26.3 407 L25.8 401.8 C25.7 400.4 24 400.4 24 401.8 L23.8 406.8 L23 400.5 C22.8 399.3 21 399.3 21 400.5 L21 406.8 L19.5 401.3 C19.3 400 17.6 400.2 17.8 401.5 L18.7 409.5 Z" fill="#c8c8c8"/><path d="M34.1 414.9 L34.1 418.5 L30.5 418.5 Z" fill="#c8c8c8"/><circle cx="48.3" cy="405.3" r="4.6" fill="none" stroke="#c8c8c8" stroke-width="1.3"/><path d="M51.8 408.8 L58.2 415" stroke="#c8c8c8" stroke-width="2.2"/><rect x="24.5" y="445" width="35" height="35.2" fill="#fff" stroke="#1e1e1e" stroke-width="1"/><rect x="34.5" y="455.2" width="15" height="15" fill="#535353" stroke="#1e1e1e" stroke-width="1"/><path d="M25.5 479.5 L59 445.5" stroke="#ff0000" stroke-width="1.8"/><rect x="6.5" y="427.5" width="35" height="35" fill="#fff" stroke="#1e1e1e" stroke-width="1"/><path d="M52 431 V434.5 Q52 437 55 437 H58.6 M56.5 434.8 L58.8 437 L56.5 439.2 M50.5 433 L52 430.8 L53.6 433" fill="none" stroke="#c8c8c8" stroke-width="1.1"/><rect x="9.7" y="471" width="7.6" height="8.5" fill="#1e1e1e" stroke="#c8c8c8" stroke-width="0.8"/><rect x="6.6" y="468.3" width="7" height="7" fill="#fff" stroke="#1e1e1e" stroke-width="1"/><rect x="6.3" y="468" width="7.6" height="7.6" fill="none" stroke="#c8c8c8" stroke-width="0.5"/><rect x="7" y="488" width="58" height="19.5" rx="2.5" fill="#535353" stroke="#5c5c5c" stroke-width="1"/><rect x="7.5" y="488.5" width="17.5" height="18.5" rx="2" fill="#3a3a3a"/><path d="M25 488.5 V507 M45.5 488.5 V507" stroke="#5c5c5c" stroke-width="1"/><rect x="9.5" y="491.5" width="12.5" height="12" fill="#fff" stroke="#111" stroke-width="1.3"/><rect x="29.4" y="491.5" width="12.5" height="12" fill="url(#gr2)" stroke="#111" stroke-width="1.3"/><rect x="49.3" y="491.5" width="12.5" height="12" fill="#fff" stroke="#111" stroke-width="1.3"/><path d="M50 503 L61 492" stroke="#ff0000" stroke-width="1.8"/><rect x="7" y="513" width="58" height="17.5" rx="2.5" fill="#535353" stroke="#5c5c5c" stroke-width="1"/><rect x="7.5" y="513.5" width="17.5" height="16.5" rx="2" fill="#333"/><path d="M25 513.5 V530 M45.5 513.5 V530" stroke="#5c5c5c" stroke-width="1"/><circle cx="14.8" cy="520.6" r="3.2" fill="none" stroke="#c8c8c8" stroke-width="1.1"/><rect x="15.5" y="521.5" width="5.6" height="5.5" fill="#c8c8c8"/><circle cx="34.5" cy="520.6" r="3.2" fill="#6a6a6a" stroke="#c8c8c8" stroke-width="1.1"/><rect x="35.4" y="521.5" width="5.6" height="5.5" fill="#c8c8c8"/><circle cx="55" cy="521" r="3.1" fill="none" stroke="#777" stroke-width="1"/><path d="M55 521 H58 A3 3 0 0 1 55 524 Z" fill="#777"/><rect x="25.5" y="543.5" width="12" height="11" fill="#6a6a6a" stroke="#c8c8c8" stroke-width="1"/><rect x="33.5" y="539.5" width="13" height="10.5" fill="#6a6a6a" stroke="#c8c8c8" stroke-width="1"/><rect x="33.5" y="539.5" width="13" height="1.5" fill="#c8c8c8"/><rect x="25.5" y="543.5" width="8" height="1.3" fill="#c8c8c8"/></svg>
</body></html>
